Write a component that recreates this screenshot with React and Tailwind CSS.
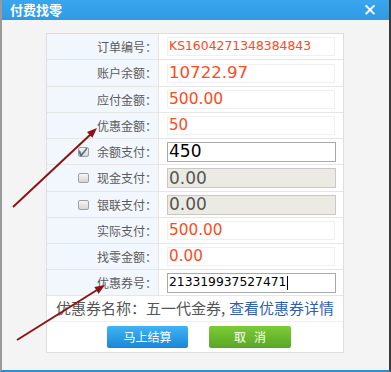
import React from "react";

const CJK = { fontFamily: '"Noto Sans CJK SC", "Noto Sans", sans-serif' };
const VER = { fontFamily: '"DejaVu Sans", Verdana, sans-serif' };

function Checkbox({ checked }) {
  return (
    <span className="flex h-[10px] w-[11px] items-center justify-center rounded-[2px] border border-[#a0a0a0] bg-gradient-to-b from-[#f6f6f6] to-[#d6d6d6] text-[8px] leading-none text-[#333]">
      {checked ? "✔" : ""}
    </span>
  );
}

function Row({ h, label, cb, children }) {
  return (
    <div className={`flex border-b border-[#e6e6e6] ${h}`}>
      <div className="flex w-[112px] shrink-0 items-center border-r border-[#e3e3e3] bg-[#f1f7fd] pl-[31px] pr-[1px]">
        {cb !== undefined && <Checkbox checked={cb} />}
        <span className="ml-auto text-[12px] text-[#5a5a5a]" style={CJK}>
          {label}：
        </span>
      </div>
      <div className="flex flex-1 items-center bg-white pl-[8px]">{children}</div>
    </div>
  );
}

function RO({ size, children, color = "text-[#ff4a1a]" }) {
  return (
    <div className={`flex h-[19px] w-[168px] items-center border border-[#f0f0f0] pl-[1px] leading-none ${size} ${color}`} style={VER}>
      {children}
    </div>
  );
}

function Edit({ size, children, disabled }) {
  return (
    <div
      className={`flex h-[20px] w-[169px] items-center border pl-[1px] leading-none ${size} ${
        disabled ? "border-[#c8c8c8] bg-[#ebebe4] text-[#555]" : "border-[#a9a9a9] bg-white text-black"
      }`}
      style={VER}
    >
      {children}
    </div>
  );
}

export default function App() {
  return (
    <div className="relative h-[372px] w-[391px] overflow-hidden">
      <div className="flex h-[372px] w-[391px] flex-col border-b-[2px] border-l-[2px] border-r-[2px] border-b-[#2d8fd0] border-l-[#9a9a9a] border-r-[#3a3a3a]">
        <div className="flex h-[20px] shrink-0 items-center justify-between bg-gradient-to-b from-[#3aa6ef] to-[#3099e4] pl-[8px] pr-[12px]">
          <span className="text-[13px] font-bold text-white" style={CJK}>付费找零</span>
          <span className="text-[17px] font-bold leading-none text-white" style={{ fontFamily: '"DejaVu Sans", sans-serif' }}>✕</span>
        </div>
        <div className="flex-1 bg-[#f4f4f4] pl-[44px] pt-[13px]">
          <div className="w-[298px] border border-b-0 border-[#dedede] bg-white">
            <Row h="h-[26px]" label="订单编号">
              <RO size="text-[12.4px]">KS1604271348384843</RO>
            </Row>
            <Row h="h-[27px]" label="账户余额">
              <RO size="text-[16.6px]">10722.97</RO>
            </Row>
            <Row h="h-[26px]" label="应付金额">
              <RO size="text-[15.5px]">500.00</RO>
            </Row>
            <Row h="h-[26px]" label="优惠金额">
              <RO size="text-[15px]">50</RO>
            </Row>
            <Row h="h-[26px]" label="余额支付" cb={true}>
              <Edit size="text-[17px]">450</Edit>
            </Row>
            <Row h="h-[27px]" label="现金支付" cb={false}>
              <Edit size="text-[17px]" disabled>0.00</Edit>
            </Row>
            <Row h="h-[26px]" label="银联支付" cb={false}>
              <Edit size="text-[17px]" disabled>0.00</Edit>
            </Row>
            <Row h="h-[26px]" label="实际支付">
              <RO size="text-[15.3px]">500.00</RO>
            </Row>
            <Row h="h-[26px]" label="找零金额">
              <RO size="text-[15.2px]">0.00</RO>
            </Row>
            <Row h="h-[26px]" label="优惠券号">
              <Edit size="text-[12.3px]">
                213319937527471<span className="ml-[1px] inline-block h-[14px] w-[1px] bg-black" />
              </Edit>
            </Row>
            <div className="flex h-[26px] items-center justify-center border-b border-[#efefef] text-[15px] text-[#555]" style={CJK}>
              优惠券名称：五一代金券, <span className="ml-[4px] text-[#2f5fae]">查看优惠券详情</span>
            </div>
            <div className="flex h-[31px] items-center justify-center gap-[21px] border-b border-[#dedede] pl-[8px]">
              <button className="h-[22px] w-[81px] rounded-[2px] bg-gradient-to-b from-[#3fb4f5] to-[#1787d6] text-[12px] text-white" style={CJK}>
                马上结算
              </button>
              <button className="h-[22px] w-[82px] rounded-[2px] bg-gradient-to-b from-[#7dcc35] to-[#58a627] text-[12px] text-white" style={CJK}>
                取&nbsp;&nbsp;&nbsp;消
              </button>
            </div>
          </div>
        </div>
      </div>
      <svg className="pointer-events-none absolute left-0 top-0" width="391" height="372">
        <line x1="13" y1="207" x2="91" y2="134" stroke="#8a1414" strokeWidth="2" />
        <polygon points="97,128 92.4,137.8 87,132" fill="#8a1414" />
        <line x1="17" y1="340" x2="97" y2="290" stroke="#8a1414" strokeWidth="2" />
        <polygon points="105,285 98.6,293.7 94.4,286.9" fill="#8a1414" />
      </svg>
    </div>
  );
}
